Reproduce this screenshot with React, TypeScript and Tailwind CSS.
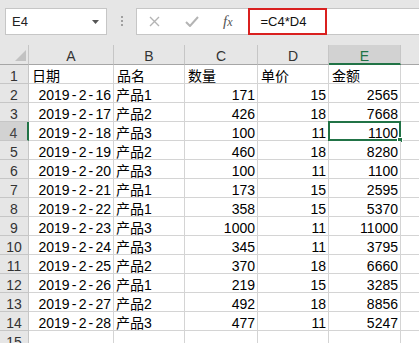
const rows: [string, string, number, number, number][] = [
  ["2019-2-16", "产品1", 171, 15, 2565],
  ["2019-2-17", "产品2", 426, 18, 7668],
  ["2019-2-18", "产品3", 100, 11, 1100],
  ["2019-2-19", "产品2", 460, 18, 8280],
  ["2019-2-20", "产品3", 100, 11, 1100],
  ["2019-2-21", "产品1", 173, 15, 2595],
  ["2019-2-22", "产品1", 358, 15, 5370],
  ["2019-2-23", "产品3", 1000, 11, 11000],
  ["2019-2-24", "产品3", 345, 11, 3795],
  ["2019-2-25", "产品2", 370, 18, 6660],
  ["2019-2-26", "产品1", 219, 15, 3285],
  ["2019-2-27", "产品2", 492, 18, 8856],
  ["2019-2-28", "产品3", 477, 11, 5247],
];

const cell =
  "h-[19px] border-r border-b border-[#d4d4d4] bg-white pt-[3px] leading-[16px] whitespace-nowrap";
const rowHead =
  "h-[19px] border-r border-b border-[#c6c6c6] bg-[#e6e6e6] pt-[3px] leading-[16px] text-center text-[#333]";

// dates in the sheet font have wide dashes
function DateText({ value }: { value: string }) {
  const parts = value.split("-");
  return (
    <>
      {parts.map((p, i) => (
        <span key={i}>
          {i > 0 && <span className="inline-block w-[9px] text-center">-</span>}
          {p}
        </span>
      ))}
    </>
  );
}

function FormulaBar() {
  return (
    <div className="flex h-[45px] items-start bg-[#e6e6e6] pt-[8px] text-[13px]">
      {/* name box */}
      <div className="ml-[5px] flex h-[27px] w-[102px] items-center justify-between border border-[#c6c6c6] bg-white pl-[6px] pr-[7px]">
        <span className="text-[#222]">E4</span>
        <svg width="7" height="4" viewBox="0 0 7 4">
          <polygon points="0,0 7,0 3.5,4" fill="#555" />
        </svg>
      </div>

      {/* separator dots */}
      <div className="ml-[14px] mt-[8px] flex flex-col gap-[2px]">
        <div className="h-[2px] w-[2px] bg-[#a0a0a0]" />
        <div className="h-[2px] w-[2px] bg-[#a0a0a0]" />
        <div className="h-[2px] w-[2px] bg-[#a0a0a0]" />
      </div>

      {/* formula box */}
      <div className="ml-[13px] flex h-[27px] flex-1 items-center border border-r-0 border-[#c6c6c6] bg-white">
        <svg className="ml-[12px]" width="11" height="11" viewBox="0 0 11 11">
          <path d="M1 1 L10 10 M10 1 L1 10" stroke="#b4b4b4" strokeWidth="1.4" fill="none" />
        </svg>
        <svg className="ml-[25px]" width="14" height="11" viewBox="0 0 14 11">
          <path d="M1 6 L5 10 L13 1" stroke="#b4b4b4" strokeWidth="2" fill="none" />
        </svg>
        <span className="ml-[24px] font-['Liberation_Serif'] text-[15px] italic text-[#555]">
          f<span className="text-[12px]">x</span>
        </span>
        <div className="ml-[15px] flex h-[27px] w-[79px] items-center border-2 border-[#d9201f] pl-[11px] text-[#111]">
          =C4*D4
        </div>
      </div>
    </div>
  );
}

export default function App() {
  return (
    <main className="h-[343px] w-[419px] overflow-hidden bg-white font-['Liberation_Sans','Noto_Sans_CJK_SC',sans-serif] text-[14px] text-black">
      <FormulaBar />

      <div className="grid grid-cols-[29px_85px_71px_73px_71px_72px_1fr]">
        {/* column headers */}
        <div className="flex h-[20px] items-end justify-end border-r border-b border-r-[#c6c6c6] border-b-[#a6a6a6] bg-[#e6e6e6] pb-[3px] pr-[2px]">
          <svg width="11" height="11" viewBox="0 0 11 11">
            <polygon points="11,0 11,11 0,11" fill="#c2c2c2" />
          </svg>
        </div>
        {["A", "B", "C", "D"].map((c) => (
          <div
            key={c}
            className="h-[20px] border-r border-b border-r-[#c6c6c6] border-b-[#a6a6a6] bg-[#e6e6e6] pt-[3px] text-center leading-[16px] text-[#333]"
          >
            {c}
          </div>
        ))}
        <div className="h-[20px] border-r border-b-2 border-r-[#c6c6c6] border-b-[#217346] bg-[#d2d2d2] pt-[3px] text-center leading-[16px] text-[#217346]">
          E
        </div>
        <div className="h-[20px] border-b border-b-[#a6a6a6] bg-[#e6e6e6]" />

        {/* header row */}
        <div className={rowHead}>1</div>
        {["日期", "品名", "数量", "单价", "金额"].map((h) => (
          <div key={h} className={`${cell} pl-[3px]`}>
            {h}
          </div>
        ))}
        <div className="h-[19px] border-b border-[#d4d4d4]" />

        {rows.map((r, i) => {
          const n = i + 2;
          const active = n === 4;
          return [
            <div
              key={`h${n}`}
              className={
                active
                  ? "h-[19px] border-r-2 border-b border-r-[#217346] border-b-[#c6c6c6] bg-[#d2d2d2] pt-[3px] text-center leading-[16px] text-[#444]"
                  : rowHead
              }
            >
              {n}
            </div>,
            <div key={`a${n}`} className={`${cell} pr-[2px] text-right`}>
              <DateText value={r[0]} />
            </div>,
            <div key={`b${n}`} className={`${cell} pl-[2px]`}>
              {r[1]}
            </div>,
            <div key={`c${n}`} className={`${cell} pr-[2px] text-right`}>
              {r[2]}
            </div>,
            <div key={`d${n}`} className={`${cell} pr-[2px] text-right`}>
              {r[3]}
            </div>,
            <div key={`e${n}`} className={`${cell} relative pr-[2px] text-right`}>
              {r[4]}
              {active && (
                <div className="absolute -top-[1px] -bottom-[1px] -left-[1px] -right-[1px] border-2 border-[#217346]">
                  <div className="absolute -bottom-[4px] -right-[4px] h-[6px] w-[6px] border border-white bg-[#217346]" />
                </div>
              )}
            </div>,
            <div key={`f${n}`} className="h-[19px] border-b border-[#d4d4d4]" />,
          ];
        })}

        <div className={rowHead}>15</div>
        <div className={cell} />
        <div className={cell} />
        <div className={cell} />
        <div className={cell} />
        <div className={cell} />
        <div className="h-[19px] border-b border-[#d4d4d4]" />
      </div>
    </main>
  );
}
